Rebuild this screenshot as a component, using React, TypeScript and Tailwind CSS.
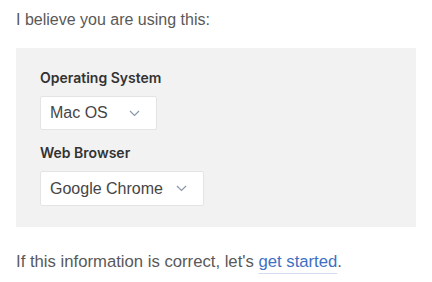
import React from "react";

function Chevron() {
  return (
    <svg width="11" height="7" viewBox="0 0 11 7" fill="none" className="shrink-0">
      <polyline points="1,1 5.5,5.5 10,1" stroke="#8797ad" strokeWidth="1.2" fill="none" />
    </svg>
  );
}

function Select({ value, width }: { value: string; width: string }) {
  return (
    <div
      className={`flex items-center justify-between ${width} bg-white border border-[#e4e4e4] rounded-[2px] pl-[9px] pr-[16px] text-[16px] text-[#454545]`}
      style={{ fontFamily: '"Liberation Sans", Arial, sans-serif' }}
    >
      <span>{value}</span>
      <Chevron />
    </div>
  );
}

export default function App() {
  return (
    <div
      className="w-[432px] h-[282px] bg-white"
      style={{ fontFamily: '"Liberation Sans", Arial, sans-serif' }}
    >
      <p className="pt-[8px] pl-4 text-[16px] leading-6 text-[#595959]">I believe you are using this:</p>
      <div className="mx-4 mt-[16px] h-[179px] bg-[#f2f2f2] pt-[21px] pl-6">
        <div
          className="text-[14px] leading-[18px] font-semibold text-[#333]"
          style={{ fontFamily: "Inter, sans-serif" }}
        >
          Operating System
        </div>
        <div className="mt-[9px]">
          <Select value="Mac OS" width="w-[117px] h-[34px]" />
        </div>
        <div
          className="mt-[14px] text-[14px] leading-[18px] font-semibold text-[#333]"
          style={{ fontFamily: "Inter, sans-serif" }}
        >
          Web Browser
        </div>
        <div className="mt-[9px]">
          <Select value="Google Chrome" width="w-[164px] h-[35px]" />
        </div>
      </div>
      <p className="mt-[23px] pl-4 text-[16.7px] leading-6 text-[#595959]">
        If this information is correct, let's{" "}
        <span className="text-[#3f6fc2] underline decoration-[#d3ddf0] underline-offset-[6px]">get started</span>.
      </p>
    </div>
  );
}
